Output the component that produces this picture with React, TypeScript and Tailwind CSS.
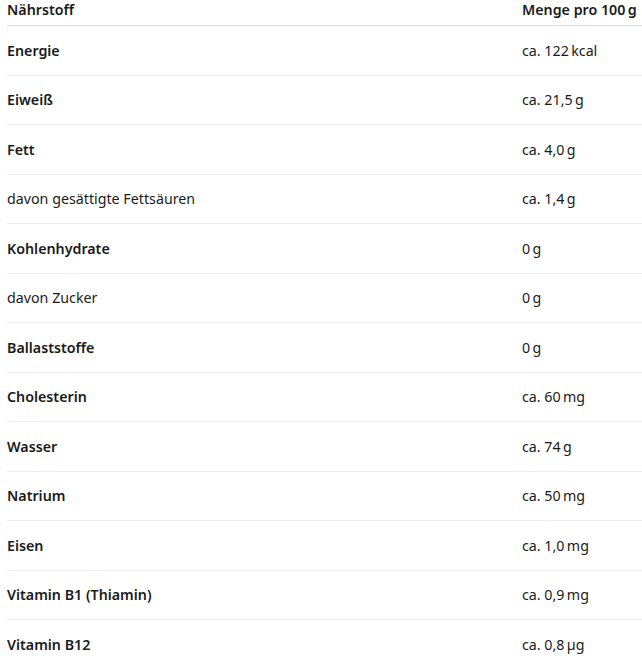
import React from "react";

const rows: { name: string; value: string; bold: boolean }[] = [
  { name: "Energie", value: "ca. 122\u202Fkcal", bold: true },
  { name: "Eiweiß", value: "ca. 21,5\u202Fg", bold: true },
  { name: "Fett", value: "ca. 4,0\u202Fg", bold: true },
  { name: "davon gesättigte Fettsäuren", value: "ca. 1,4\u202Fg", bold: false },
  { name: "Kohlenhydrate", value: "0\u202Fg", bold: true },
  { name: "davon Zucker", value: "0\u202Fg", bold: false },
  { name: "Ballaststoffe", value: "0\u202Fg", bold: true },
  { name: "Cholesterin", value: "ca. 60\u202Fmg", bold: true },
  { name: "Wasser", value: "ca. 74\u202Fg", bold: true },
  { name: "Natrium", value: "ca. 50\u202Fmg", bold: true },
  { name: "Eisen", value: "ca. 1,0\u202Fmg", bold: true },
  { name: "Vitamin B1 (Thiamin)", value: "ca. 0,9\u202Fmg", bold: true },
  { name: "Vitamin B12", value: "ca. 0,8\u202Fµg", bold: true },
];

export default function App() {
  return (
    <div
      className="w-[642px] h-[664px] overflow-hidden bg-white pl-[7px] text-[14.25px] text-[#1a1a1a]"
      style={{ fontFamily: '"Noto Sans", "Open Sans", sans-serif' }}
    >
      <div className="grid grid-cols-[515px_1fr] h-[26px] border-b border-[#d9d9d9] items-start whitespace-nowrap">
        <div className="font-semibold leading-[20px]">Nährstoff</div>
        <div className="font-semibold leading-[20px]">Menge pro 100&#8239;g</div>
      </div>
      {rows.map((r) => (
        <div
          key={r.name}
          className="grid grid-cols-[515px_1fr] h-[49.5px] border-b border-[#efefef] items-center whitespace-nowrap"
        >
          <div className={r.bold ? "font-semibold" : "font-normal"}>{r.name}</div>
          <div>{r.value}</div>
        </div>
      ))}
    </div>
  );
}
